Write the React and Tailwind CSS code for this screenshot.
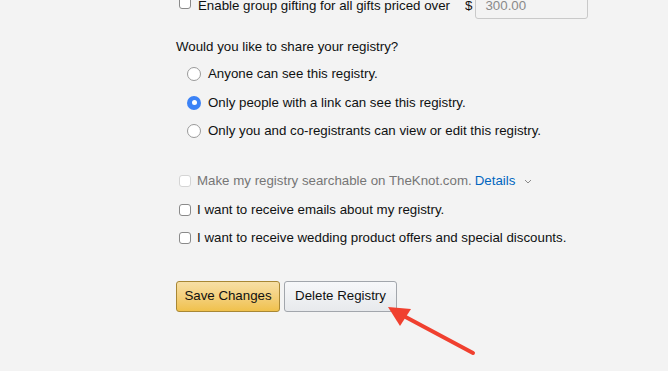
import React from "react";

function Checkbox({ disabled }) {
  return (
    <span
      className={`inline-block w-[12px] h-[12px] rounded-[3px] border bg-white shrink-0 ${
        disabled ? "border-[#d5d5d5] bg-[#f7f7f7]" : "border-[#8a8a8a]"
      }`}
    />
  );
}

function Radio({ checked }) {
  return checked ? (
    <span className="inline-flex items-center justify-center w-[14px] h-[14px] rounded-full bg-[#3b82f6] shrink-0">
      <span className="w-[5px] h-[5px] rounded-full bg-white" />
    </span>
  ) : (
    <span className="inline-block w-[14px] h-[14px] rounded-full border border-[#9a9a9a] bg-white shrink-0" />
  );
}

export default function App() {
  return (
    <div
      className="relative w-full h-[371px] overflow-hidden bg-[#f3f3f3] text-[13.3px] text-[#0f1111] pl-[176px]"
      style={{ fontFamily: '"Liberation Sans", Arial, sans-serif' }}
    >
      <div className="flex items-center h-[31px] -mt-[12px]">
        <span className="ml-[3px] mt-[2px]"><Checkbox /></span>
        <span className="ml-[7px] pt-[4px]">Enable group gifting for all gifts priced over</span>
        <span className="ml-[15px] pt-[4px]">$</span>
        <div className="ml-[3px] w-[113px] h-[31px] border border-[#c9c9c9] rounded-[3px] bg-[#f3f3f3] flex items-center pl-[9px] pt-[4px] text-[#8a8a8a]">
          300.00
        </div>
      </div>

      <div className="mt-[18px] h-[19px] leading-[19px]">Would you like to share your registry?</div>

      <div className="mt-[4px] ml-[11px] flex flex-col">
        <label className="flex items-center h-[28.5px] gap-[7px]"><Radio />Anyone can see this registry.</label>
        <label className="flex items-center h-[28.5px] gap-[7px]"><Radio checked />Only people with a link can see this registry.</label>
        <label className="flex items-center h-[28.5px] gap-[7px]"><Radio />Only you and co-registrants can view or edit this registry.</label>
      </div>

      <div className="mt-[21.5px] ml-[3px] flex flex-col">
        <div className="flex items-center h-[28.5px] text-[#767676]">
          <Checkbox disabled />
          <span className="ml-[6px]">Make my registry searchable on TheKnot.com.</span>
          <span className="ml-[3px] text-[#0066c0]">Details</span>
          <svg width="8" height="5" viewBox="0 0 8 5" className="ml-[9px]">
            <path d="M1 1l3 3 3-3" fill="none" stroke="#8a8a8a" strokeWidth="1" />
          </svg>
        </div>
        <div className="flex items-center h-[28.5px] gap-[6px]"><Checkbox />I want to receive emails about my registry.</div>
        <div className="flex items-center h-[28.5px] gap-[6px]"><Checkbox />I want to receive wedding product offers and special discounts.</div>
      </div>

      <div className="mt-[28px] flex gap-[4px]">
        <button className="h-[31px] w-[104px] rounded-[3px] border border-[#a88734] bg-gradient-to-b from-[#f7dfa5] to-[#f0c14b] text-[13.3px] text-[#111]">
          Save Changes
        </button>
        <button className="h-[31px] w-[113px] rounded-[3px] border border-[#a2a6ac] bg-gradient-to-b from-[#f7f8fa] to-[#e7e9ec] text-[13.3px] text-[#111]">
          Delete Registry
        </button>
      </div>

      <svg className="absolute left-0 top-0 pointer-events-none" width="668" height="371">
        <line x1="473" y1="353" x2="400" y2="314" stroke="#f0402f" strokeWidth="4" strokeLinecap="round" />
        <polygon points="388,307 411,309 400,326" fill="#f0402f" />
      </svg>
    </div>
  );
}
